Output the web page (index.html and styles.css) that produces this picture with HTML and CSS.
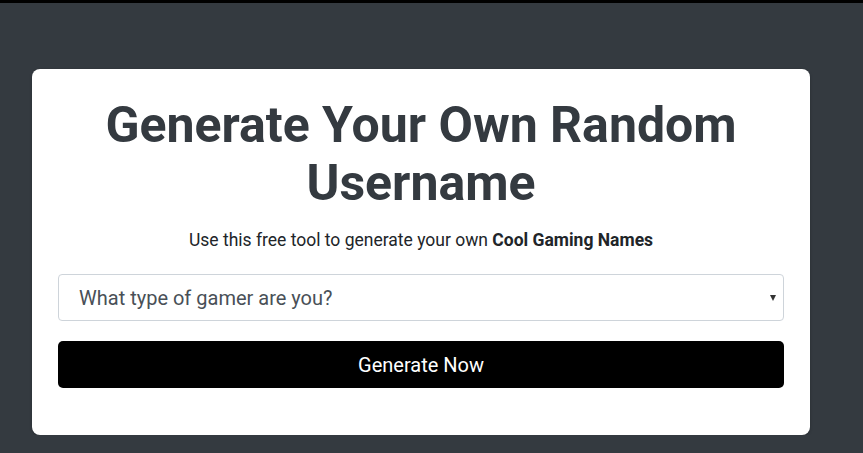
FILE: index.html
```html
<!DOCTYPE html>
<html lang="en">
<head>
    <meta charset="UTF-8">
    <title>Random Username Generator</title>
    <link rel="stylesheet" href="styles.css">
</head>
<body>
    <div class="topbar"></div>

    <main class="card">
        <h1>Generate Your Own Random Username</h1>
        <p class="lead">Use this free tool to generate your own <b>Cool Gaming Names</b></p>

        <form name="frmName">
            <div class="select_wrap">
                <select name="gamer" id="gamer">
                    <option value="">What type of gamer are you?</option>
                    <option value="fps">FPS</option>
                    <option value="rpg">RPG</option>
                    <option value="moba">MOBA</option>
                </select>
            </div>
            <button type="button">Generate Now</button>
        </form>
    </main>
</body>
</html>
```

FILE: styles.css
```css
*{padding:0;margin:0;box-sizing:border-box;}
body{background:#343a40;font-family:Roboto,"Liberation Sans",sans-serif;color:#212529;}

.topbar{height:3px;background:#000;}

.card{width:778px;margin:66px 0 0 32px;padding:27px 26px 47px;background:#fff;border-radius:8px;box-shadow:0 1px 3px rgba(0,0,0,.25);}

h1{font-size:50px;font-weight:700;line-height:58px;color:#343a40;text-align:center;padding:0 30px;}
.lead{font-size:17.5px;line-height:26px;text-align:center;margin:15px 0 21px;}
.lead b{font-weight:700;}

.select_wrap{position:relative;}
.select_wrap::after{content:"";position:absolute;right:8px;top:21px;border-left:3.5px solid transparent;border-right:3.5px solid transparent;border-top:6px solid #333;}
select{display:block;width:100%;height:47px;padding:0 20px;border:1px solid #ced4da;border-radius:4px;background:#fff;font-family:inherit;font-size:20px;color:#495057;-webkit-appearance:none;appearance:none;outline:none;}

button{display:block;width:100%;height:47px;margin-top:20px;background:#000;color:#fff;border:none;border-radius:5px;font-family:inherit;font-size:20px;cursor:pointer;}
```
